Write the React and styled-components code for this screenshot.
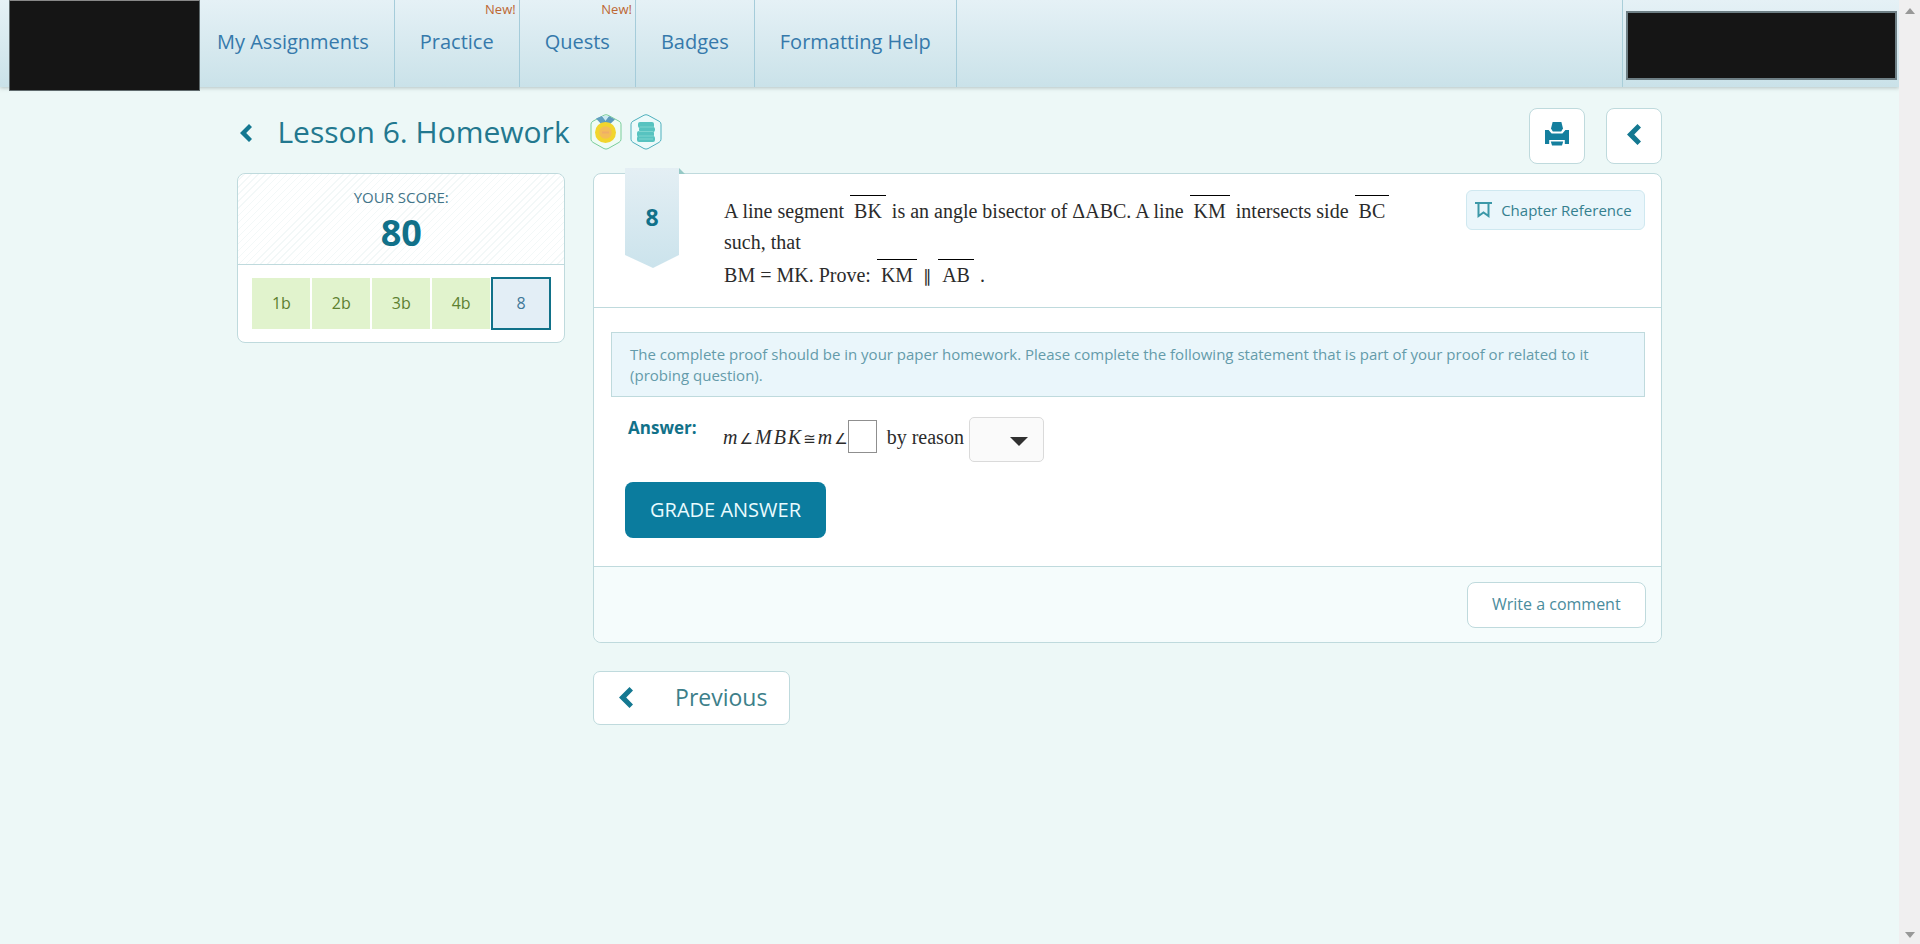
import React, { useState } from "react";
import styled, { createGlobalStyle } from "styled-components";

const colors = {
  page: "#edf8f7",
  border: "#bfdadd",
  teal: "#117189",
  primary: "#0b7c9e",
  link: "#3579ab",
  text: "#2b2b2b",
};

const GlobalStyle = createGlobalStyle`
  * {
    box-sizing: border-box;
  }
  body {
    margin: 0;
    background: ${colors.page};
    font-family: "Open Sans", sans-serif;
    color: ${colors.teal};
  }
  button, input, select {
    font: inherit;
    color: inherit;
  }
  a {
    color: inherit;
    text-decoration: none;
  }
`;

const Window = styled.div`
  display: flex;
  min-height: 100vh;
`;

const Page = styled.div`
  flex: 1;
  min-width: 0;
`;

// Scroll track on the right edge
const ScrollTrack = styled.div`
  width: 21px;
  padding: 8px 0 6px;
  display: flex;
  flex-direction: column;
  align-items: center;
  justify-content: space-between;
  background: #f0eff0;
`;

const Header = styled.header`
  display: flex;
  height: 87px;
  padding: 0 2px 0 9px;
  background: linear-gradient(#e5f1f6, #cae2e9);
  box-shadow: 0 1px 4px rgba(90, 110, 110, 0.4);
`;

const Logo = styled.div`
  width: 191px;
  height: 91px;
  background: #151515;
  border: 1px solid #5f6a6d;
  border-top-color: #888;
`;

const Account = styled.div`
  margin-left: auto;
  padding: 11px 0 0 3px;
  border-left: 1px solid #a9ced9;
`;

const AccountName = styled.div`
  width: 271px;
  height: 69px;
  background: #151515;
  border: 2px solid #6e7f85;
`;

const Nav = styled.nav`
  display: flex;
`;

const NavLink = styled.a`
  position: relative;
  display: flex;
  align-items: center;
  padding: 0 25px 5px;
  border-right: 1px solid #a5ccda;
  font-size: 20px;
  color: ${colors.link};

  &:first-child {
    padding-left: 17px;
  }
`;

const NewTag = styled.span`
  position: absolute;
  top: 0;
  right: 3px;
  font-size: 13px;
  line-height: 18px;
  color: #bd6733;
`;

const Content = styled.main`
  width: 75%;
  margin: 0 auto;
  padding: 21px 0 40px;
`;

const TitleRow = styled.div`
  display: flex;
  align-items: flex-start;
  gap: 21px;
  height: 65px;
`;

const TitleGroup = styled.div`
  flex: 1;
  display: flex;
  align-items: center;
  height: 48px;
`;

const BackLink = styled.a`
  display: flex;
  padding: 2px 24px 0 2px;
`;

const Title = styled.h1`
  margin: 0 20px 0 0;
  font-size: 30px;
  font-weight: 400;
  line-height: 48px;
  color: #23788f;
`;

const BadgeList = styled.div`
  display: flex;
  gap: 8px;
`;

const IconButton = styled.button`
  display: flex;
  align-items: center;
  justify-content: center;
  width: 56px;
  height: 56px;
  padding: 0 0 4px;
  border: 1px solid ${colors.border};
  border-radius: 8px;
  background: #fff;
`;

const Columns = styled.div`
  display: grid;
  grid-template-columns: 23fr 75fr;
  column-gap: 28px;
  align-items: start;
`;

const Card = styled.section`
  border: 1px solid ${colors.border};
  border-radius: 8px;
  background: #fff;
`;

const Score = styled.div`
  padding: 10px 0 8px;
  border-bottom: 1px solid ${colors.border};
  border-radius: 8px 8px 0 0;
  text-align: center;
  background: repeating-linear-gradient(135deg, #fff 0 4px, #f3f8f8 4px 5px);
`;

const ScoreLabel = styled.div`
  font-size: 15px;
  line-height: 26px;
  color: #427488;
`;

const ScoreValue = styled.div`
  font-size: 36px;
  font-weight: 700;
  line-height: 46px;
`;

const Problems = styled.div`
  display: grid;
  grid-template-columns: repeat(5, 1fr);
  padding: 12px 13px;
`;

const Problem = styled.a`
  display: flex;
  align-items: center;
  justify-content: center;
  height: 53px;
  padding-bottom: 2px;
  border: ${(props) => (props.$active ? `2px solid ${colors.teal}` : "1px solid #fff")};
  background: ${(props) => (props.$active ? "#e3eef6" : "#e1f3cd")};
  color: ${(props) => (props.$active ? "#3f7898" : "#5d8030")};
  font-size: 16px;
`;

const Question = styled.div`
  display: flex;
  align-items: flex-start;
  height: 134px;
  padding: 0 16px 0 31px;
  border-bottom: 1px solid ${colors.border};
`;

const Ribbon = styled.div`
  position: relative;
  width: 54px;
  height: 100px;
  margin-top: -6px;
`;

const RibbonNumber = styled.span`
  position: absolute;
  inset: 0 0 2px;
  display: flex;
  align-items: center;
  justify-content: center;
  font-size: 23px;
  font-weight: 700;
`;

const QuestionText = styled.div`
  flex: 1;
  margin: 22px 40px 0 45px;
  font-family: "Liberation Serif", serif;
  font-size: 20px;
  line-height: 31px;
  color: ${colors.text};

  p {
    margin: 0 0 2px;
  }
`;

const Overline = styled.span`
  margin: 0 1px;
  padding: 4px 4px 0;
  border-top: 1px solid #000;
`;

const Parallel = styled.span`
  font-size: 17px;
`;

const ReferenceLink = styled.a`
  display: flex;
  align-items: center;
  gap: 9px;
  height: 40px;
  margin-top: 16px;
  padding: 0 12px 0 8px;
  border: 1px solid #cfe8f0;
  border-radius: 6px;
  background: #eaf6fb;
  font-size: 15px;
  color: #35808f;
`;

const AnswerArea = styled.div`
  padding: 24px 16px 28px 17px;
`;

const Hint = styled.p`
  margin: 0 0 19px;
  padding: 11px 18px 10px;
  border: 1px solid ${colors.border};
  background: #eaf6fb;
  font-size: 15px;
  line-height: 21px;
  color: #649baa;
`;

const AnswerRow = styled.div`
  display: flex;
  padding-left: 17px;
  color: ${colors.text};
`;

const AnswerLabel = styled.label`
  width: 95px;
  font-size: 17px;
  font-weight: 700;
  line-height: 24px;
  color: ${colors.teal};
`;

const Expression = styled.div`
  display: flex;
  align-items: center;
  height: 46px;
  font-family: "Liberation Serif", "DejaVu Sans", serif;
  font-size: 20px;
`;

const Formula = styled.span`
  display: flex;
  gap: 2px;
  align-items: baseline;
  padding-bottom: 4px;
`;

const MathSymbol = styled.span`
  font-size: 15px;
`;

const ReasonLabel = styled.label`
  padding-bottom: 4px;
`;

const AngleInput = styled.input`
  width: 29px;
  height: 33px;
  margin: 0 10px 6px 0;
  padding: 0 4px;
  border: 1px solid #8f8f8f;
  background: #fff;
`;

const SelectBox = styled.div`
  position: relative;
  margin-left: 5px;
  display: flex;
`;

const ReasonSelect = styled.select`
  appearance: none;
  width: 75px;
  height: 45px;
  padding: 0 30px 0 8px;
  border: 1px solid #dadada;
  border-radius: 5px;
  background: #fafafa;
`;

const SelectArrow = styled.svg`
  position: absolute;
  right: 16px;
  top: 20px;
  pointer-events: none;
`;

const GradeButton = styled.button`
  height: 56px;
  margin: 20px 0 0 14px;
  padding: 0 25px 2px;
  border: 0;
  border-radius: 8px;
  background: ${colors.primary};
  font-size: 20px;
  color: #e9fbff;
`;

const CardFooter = styled.div`
  display: flex;
  justify-content: flex-end;
  padding: 15px 15px 14px;
  border-top: 1px solid ${colors.border};
  border-radius: 0 0 8px 8px;
  background: #f5fcfc;
`;

const CommentButton = styled.button`
  height: 46px;
  padding: 0 24px 2px;
  border: 1px solid ${colors.border};
  border-radius: 8px;
  background: #fff;
  font-size: 16px;
  color: #4a8c9d;
`;

const PreviousLink = styled.a`
  display: inline-flex;
  align-items: center;
  gap: 42px;
  height: 54px;
  margin-top: 28px;
  padding: 0 22px 2px 25px;
  border: 1px solid ${colors.border};
  border-radius: 7px;
  background: #fff;
  font-size: 23px;
  color: #3d7f8a;
`;

const Chevron = ({ width = 14, height = 21 }) => (
  <svg width={width} height={height} viewBox="0 0 14 21" aria-hidden="true">
    <path d="M10.5 0 14 3.4 7.2 10.5 14 17.5 10.5 21 0 10.5Z" fill="#147891" />
  </svg>
);

const PrinterIcon = () => (
  <svg width="24" height="24" viewBox="0 0 24 24" fill="#147f9e" aria-hidden="true">
    <path d="M7.6 0h8.8l1.6 6.4-1.800 3.200H7.800L6 6.400Z" />
    <path d="M0 8h3.600l3 3.600h10.800l3-3.600H24v14h-4.200v-4H4.200v4H0Z" />
    <path d="M5.800 19.600h12.400L17 23.600H7Z" />
  </svg>
);

const MedalBadge = () => (
  <svg width="32" height="36" viewBox="0 0 32 36" role="img" aria-label="Medal">
    <path
      d="M14 1.2q2-1 4 0l11 6q2 1 2 3v15q0 2-2 3.2l-11 6.2q-2 1-4 0l-11-6.2q-2-1.200-2-3.200v-15q0-2 2-3Z"
      fill="#effcf4"
      stroke="#7acd9b"
    />
    <path d="M6 4.500 12 2l7 7-7 2Z" fill="#629fc0" />
    <path d="M25 5.500 19 2l-7 7 7 2Z" fill="#5d9bbb" />
    <path d="M12 2h7l-3.500 5Z" fill="#c9e9f1" />
    <circle cx="15.500" cy="18.500" r="10.500" fill="#f2d52c" />
    <circle cx="15.500" cy="18.500" r="6.200" fill="#f3bd58" />
    <path d="M12 18.500h7" stroke="#eead67" strokeWidth="2" />
  </svg>
);

const BooksBadge = () => (
  <svg width="32" height="36" viewBox="0 0 32 36" role="img" aria-label="Books">
    <path
      d="M14 1.2q2-1 4 0l11 6q2 1 2 3v15q0 2-2 3.2l-11 6.2q-2 1-4 0l-11-6.2q-2-1.200-2-3.200v-15q0-2 2-3Z"
      fill="#ecfafa"
      stroke="#4fb0bd"
    />
    <g fill="#57c3c0">
      <rect x="8" y="8" width="16" height="6" rx="2" />
      <rect x="9" y="13" width="16" height="5" rx="2" />
      <rect x="7" y="17" width="17" height="6" rx="2" />
      <rect x="7" y="22" width="18" height="6" rx="2" />
    </g>
    <path d="M10 13h13M9 17.500h14M9 22h14M9 25h14" stroke="#8fdcd5" strokeWidth="0.700" />
  </svg>
);

const BookmarkIcon = () => (
  <svg width="17" height="16" viewBox="0 0 17 16" fill="none" stroke="#3c98a8" strokeWidth="2" aria-hidden="true">
    <path d="M0 1h17M3.500 1v13l5-3.500 5 3.500V1" />
  </svg>
);

const RibbonShape = () => (
  <svg width="60" height="100" viewBox="0 0 60 100" aria-hidden="true">
    <defs>
      <linearGradient id="ribbon" x1="0" y1="0" x2="0" y2="1">
        <stop offset="0" stopColor="#e4eff4" />
        <stop offset="1" stopColor="#cbe3ec" />
      </linearGradient>
    </defs>
    <path d="M54 0l6 6h-6Z" fill="#96c9c6" />
    <path d="M0 0h54v87L28 100 0 87Z" fill="url(#ribbon)" />
  </svg>
);

const navItems = [
  { label: "My Assignments" },
  { label: "Practice", isNew: true },
  { label: "Quests", isNew: true },
  { label: "Badges" },
  { label: "Formatting Help" },
];

const problems = ["1b", "2b", "3b", "4b", "8"];

const App = () => {
  const [angle, setAngle] = useState("");
  const [reason, setReason] = useState("");

  return (
    <Window>
      <GlobalStyle />
      <Page>
        <Header>
          <Logo />
          <Nav>
            {navItems.map((item) => (
              <NavLink key={item.label} href="#">
                {item.label}
                {item.isNew && <NewTag>New!</NewTag>}
              </NavLink>
            ))}
          </Nav>
          <Account>
            <AccountName />
          </Account>
        </Header>

        <Content>
          <TitleRow>
            <TitleGroup>
              <BackLink href="#" aria-label="Back to lessons">
                <Chevron width={14} height={18} />
              </BackLink>
              <Title>Lesson 6. Homework</Title>
              <BadgeList>
                <MedalBadge />
                <BooksBadge />
              </BadgeList>
            </TitleGroup>
            <IconButton aria-label="Print">
              <PrinterIcon />
            </IconButton>
            <IconButton aria-label="Previous problem">
              <Chevron />
            </IconButton>
          </TitleRow>

          <Columns>
            <Card>
              <Score>
                <ScoreLabel>YOUR SCORE:</ScoreLabel>
                <ScoreValue>80</ScoreValue>
              </Score>
              <Problems>
                {problems.map((name) => (
                  <Problem key={name} href="#" $active={name === "8"}>
                    {name}
                  </Problem>
                ))}
              </Problems>
            </Card>

            <div>
              <Card>
                <Question>
                  <Ribbon>
                    <RibbonShape />
                    <RibbonNumber>8</RibbonNumber>
                  </Ribbon>
                  <QuestionText>
                    <p>
                      A line segment <Overline>BK</Overline> is an angle bisector of ΔABC. A line{" "}
                      <Overline>KM</Overline> intersects side <Overline>BC</Overline> such, that
                    </p>
                    <p>
                      BM = MK. Prove: <Overline>KM</Overline> <Parallel>∥</Parallel>{" "}
                      <Overline>AB</Overline> .
                    </p>
                  </QuestionText>
                  <ReferenceLink href="#">
                    <BookmarkIcon />
                    Chapter Reference
                  </ReferenceLink>
                </Question>

                <AnswerArea>
                  <Hint>
                    The complete proof should be in your paper homework. Please complete the following
                    statement that is part of your proof or related to it (probing question).
                  </Hint>
                  <AnswerRow>
                    <AnswerLabel htmlFor="angle">Answer:</AnswerLabel>
                    <Expression>
                      <Formula>
                        <i>m</i>
                        <MathSymbol>∠</MathSymbol>
                        <i>M</i>
                        <i>B</i>
                        <i>K</i>
                        <MathSymbol>≅</MathSymbol>
                        <i>m</i>
                        <MathSymbol>∠</MathSymbol>
                      </Formula>
                      <AngleInput id="angle" value={angle} onChange={(e) => setAngle(e.target.value)} />
                      <ReasonLabel htmlFor="reason">by reason</ReasonLabel>
                      <SelectBox>
                        <ReasonSelect id="reason" value={reason} onChange={(e) => setReason(e.target.value)}>
                          <option value=""></option>
                        </ReasonSelect>
                        <SelectArrow width="18" height="9" viewBox="0 0 18 9" aria-hidden="true">
                          <path d="M0 0h18L9 9Z" fill="#303030" />
                        </SelectArrow>
                      </SelectBox>
                    </Expression>
                  </AnswerRow>
                  <GradeButton>GRADE ANSWER</GradeButton>
                </AnswerArea>

                <CardFooter>
                  <CommentButton>Write a comment</CommentButton>
                </CardFooter>
              </Card>
              <PreviousLink href="#">
                <Chevron />
                Previous
              </PreviousLink>
            </div>
          </Columns>
        </Content>
      </Page>
      <ScrollTrack aria-hidden="true">
        <svg width="10" height="6" viewBox="0 0 10 6">
          <path d="M5 0l5 6H0Z" fill="#989898" />
        </svg>
        <svg width="10" height="6" viewBox="0 0 10 6">
          <path d="M0 0h10L5 6Z" fill="#989898" />
        </svg>
      </ScrollTrack>
    </Window>
  );
};

export default App;
